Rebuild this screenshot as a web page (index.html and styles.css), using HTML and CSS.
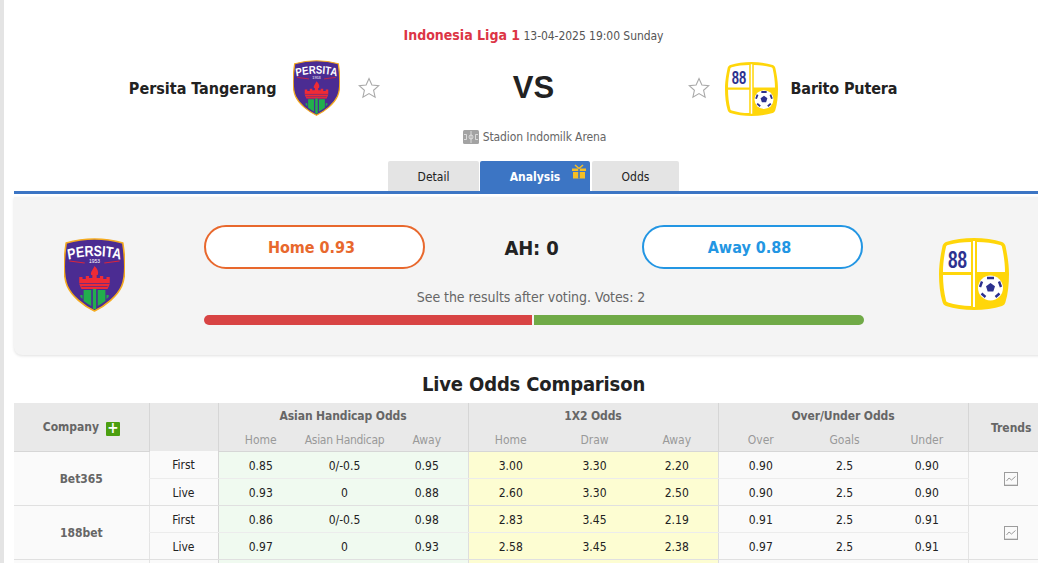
FILE: index.html
```html
<!DOCTYPE html>
<html lang="en">
<head>
<meta charset="utf-8">
<title>Persita Tangerang vs Barito Putera</title>
<link rel="stylesheet" href="styles.css">
</head>
<body>
<div class="page">
  <header class="match">
    <div class="meta"><span class="league">Indonesia Liga 1</span> <span class="when">13-04-2025 19:00 Sunday</span></div>
    <div class="teams">
      <div class="team team-home">
        <span class="team-name">Persita Tangerang</span>
        <svg class="logo-persita" viewBox="2 0 56 74" preserveAspectRatio="none" aria-hidden="true">
          <defs><path id="arc-a" d="M-36 23Q0 13 36 23"/></defs>
          <path d="M30 1C39 1 48 2.500 56 5C58 20 59 38 55 48C51 58 40 68 30 73C20 68 9 58 5 48C1 38 2 20 4 5C12 2.500 21 1 30 1Z" fill="#4b2c92" stroke="#f5ab1f" stroke-width="1.500"/>
          <text class="crest-name" transform="translate(30 0) scale(.76 1)" text-anchor="middle"><textPath href="#arc-a" startOffset="50%">PERSITA</textPath></text>
          <text x="30" y="25" class="crest-year" text-anchor="middle">1953</text>
          <path d="M7 23L21 25M39 25L53 23" stroke="#d9263b" stroke-width="1"/>
          <path d="M30 28C33 31 34 34 33 37H27C26 34 28 33 30 28Z" fill="#ef2b35"/>
          <path d="M16 39H19V41H22V38H25V40H28V37H32V40H35V38H38V41H41V39H44V46L42 51H18L16 46Z" fill="#ef2b35"/>
          <path d="M16 45.500H44M18 48.500H42" stroke="#4b2c92" stroke-width=".7"/>
          <path d="M20 52H27V68L24 66L20 63ZM28.500 51H31.500V71H28.500ZM33 52H40V63L36 66L33 68Z" fill="#22ae4c"/>
          <path d="M17 57H19V61L17 59ZM41 57H43V59L41 61Z" fill="#22ae4c"/>
        </svg>
        <svg class="star" viewBox="0 0 22 22" aria-hidden="true"><path d="M11 1.500L13.900 8L20.800 8.700L15.600 13.300L17.100 20.200L11 16.600L4.900 20.200L6.400 13.300L1.200 8.700L8.100 8Z"/></svg>
      </div>
      <div class="versus">VS</div>
      <div class="team team-away">
        <svg class="star" viewBox="0 0 22 22" aria-hidden="true"><path d="M11 1.500L13.900 8L20.800 8.700L15.600 13.300L17.100 20.200L11 16.600L4.900 20.200L6.400 13.300L1.200 8.700L8.100 8Z"/></svg>
        <svg class="logo-barito" viewBox="0 0 70 72" preserveAspectRatio="none" aria-hidden="true">
          <path d="M35 0C45 0 55 1.500 63 4C65 5 66 6 66.500 8C69 20 70 28 70 36C70 46 69 56 66.500 64C66 66 65 67 63 68C55 70.500 45 72 35 72C25 72 15 70.500 7 68C5 67 4 66 3.500 64C1 56 0 46 0 36C0 28 1 20 3.500 8C4 6 5 5 7 4C15 1.500 25 0 35 0Z" fill="#ffd60a"/>
          <path d="M32 4V34H4C4 26 5 18 7 9C7 8 8 7 9 7C16 5 24 4 32 4Z" fill="#fff"/>
          <path d="M38 4C46 4 54 5 61 7C62 7 63 8 63 9C65 18 66 26 66 34H38Z" fill="#fff"/>
          <path d="M32 37V68C24 68 16 66.500 9 64.500C8 64 7 63.500 7 62.500C5 54 4 46 4 37Z" fill="#fff"/>
          <path d="M34 3H36V69H34Z" fill="#fff"/>
          <text x="18.500" y="29.500" class="crest-88" text-anchor="middle" textLength="19" lengthAdjust="spacingAndGlyphs">88</text>
          <circle cx="51.500" cy="50" r="12.500" fill="#fff"/>
          <path d="M51.500 45L56 48.300L54.300 53.500H48.700L47 48.300Z" fill="#2d318f"/>
          <path d="M48 40H55M60 43.500L62 49M60.500 55.500L56.500 59M46.500 59L42.500 55.500M41 49L43 43.500" stroke="#2d318f" stroke-width="2.400" fill="none"/>
        </svg>
        <span class="team-name team-name-away">Barito Putera</span>
      </div>
    </div>
    <div class="venue">
      <svg class="venue-icon" viewBox="0 0 16 14" aria-hidden="true"><rect width="16" height="14" rx="1.500" fill="#a3a3a3"/><path d="M8 1V13M1 4.500H3.500V9.500H1M15 4.500H12.500V9.500H15" stroke="#e8e8e8" stroke-width=".8" fill="none"/><circle cx="8" cy="7" r="2" fill="none" stroke="#e8e8e8" stroke-width=".8"/></svg>
      <span>Stadion Indomilk Arena</span>
    </div>
    <nav class="tabs">
      <a class="tab tab-detail">Detail</a>
      <a class="tab tab-analysis">Analysis
        <svg class="gift" viewBox="0 0 14 14" aria-hidden="true"><path d="M0 4H14V6.500H0ZM1 7.500H13V14H1Z" fill="#f5bf26"/><path d="M6.200 4V14H7.800V4Z" fill="#3d76c5"/><path d="M7 4L3 .5M7 4L11 .5" stroke="#f5bf26" stroke-width="1.600"/></svg>
      </a>
      <a class="tab tab-odds">Odds</a>
    </nav>
  </header>

  <section class="vote">
    <div class="vote-logo vote-logo-home">
      <svg class="logo-persita-lg" viewBox="2 0 56 74" preserveAspectRatio="none" aria-hidden="true">
        <defs><path id="arc-b" d="M-36 23Q0 13 36 23"/></defs>
        <path d="M30 1C39 1 48 2.500 56 5C58 20 59 38 55 48C51 58 40 68 30 73C20 68 9 58 5 48C1 38 2 20 4 5C12 2.500 21 1 30 1Z" fill="#4b2c92" stroke="#f5ab1f" stroke-width="1.500"/>
        <text class="crest-name" transform="translate(30 0) scale(.76 1)" text-anchor="middle"><textPath href="#arc-b" startOffset="50%">PERSITA</textPath></text>
        <text x="30" y="25" class="crest-year" text-anchor="middle">1953</text>
        <path d="M7 23L21 25M39 25L53 23" stroke="#d9263b" stroke-width="1"/>
        <path d="M30 28C33 31 34 34 33 37H27C26 34 28 33 30 28Z" fill="#ef2b35"/>
        <path d="M16 39H19V41H22V38H25V40H28V37H32V40H35V38H38V41H41V39H44V46L42 51H18L16 46Z" fill="#ef2b35"/>
        <path d="M16 45.500H44M18 48.500H42" stroke="#4b2c92" stroke-width=".7"/>
        <path d="M20 52H27V68L24 66L20 63ZM28.500 51H31.500V71H28.500ZM33 52H40V63L36 66L33 68Z" fill="#22ae4c"/>
        <path d="M17 57H19V61L17 59ZM41 57H43V59L41 61Z" fill="#22ae4c"/>
      </svg>
    </div>
    <div class="vote-main">
      <div class="vote-buttons">
        <button class="pick pick-home">Home 0.93</button>
        <div class="handicap">AH: 0</div>
        <button class="pick pick-away">Away 0.88</button>
      </div>
      <p class="vote-note">See the results after voting. Votes: 2</p>
      <div class="vote-bar"><span class="bar-home"></span><span class="bar-away"></span></div>
    </div>
    <div class="vote-logo vote-logo-away">
      <svg class="logo-barito-lg" viewBox="0 0 70 72" preserveAspectRatio="none" aria-hidden="true">
        <path d="M35 0C45 0 55 1.500 63 4C65 5 66 6 66.500 8C69 20 70 28 70 36C70 46 69 56 66.500 64C66 66 65 67 63 68C55 70.500 45 72 35 72C25 72 15 70.500 7 68C5 67 4 66 3.500 64C1 56 0 46 0 36C0 28 1 20 3.500 8C4 6 5 5 7 4C15 1.500 25 0 35 0Z" fill="#ffd60a"/>
        <path d="M32 4V34H4C4 26 5 18 7 9C7 8 8 7 9 7C16 5 24 4 32 4Z" fill="#fff"/>
        <path d="M38 4C46 4 54 5 61 7C62 7 63 8 63 9C65 18 66 26 66 34H38Z" fill="#fff"/>
        <path d="M32 37V68C24 68 16 66.500 9 64.500C8 64 7 63.500 7 62.500C5 54 4 46 4 37Z" fill="#fff"/>
        <path d="M34 3H36V69H34Z" fill="#fff"/>
        <text x="18.500" y="29.500" class="crest-88" text-anchor="middle" textLength="19" lengthAdjust="spacingAndGlyphs">88</text>
        <circle cx="51.500" cy="50" r="12.500" fill="#fff"/>
        <path d="M51.500 45L56 48.300L54.300 53.500H48.700L47 48.300Z" fill="#2d318f"/>
        <path d="M48 40H55M60 43.500L62 49M60.500 55.500L56.500 59M46.500 59L42.500 55.500M41 49L43 43.500" stroke="#2d318f" stroke-width="2.400" fill="none"/>
      </svg>
    </div>
  </section>

  <h2 class="section-title">Live Odds Comparison</h2>

  <table class="odds">
    <colgroup>
      <col class="c-company"><col class="c-type">
      <col class="c-first"><col class="c-mid"><col class="c-last">
      <col class="c-first"><col class="c-mid"><col class="c-last">
      <col class="c-first"><col class="c-mid"><col class="c-last">
      <col class="c-trend">
    </colgroup>
    <thead>
      <tr class="head-top">
        <th rowspan="2" class="head-company">Company <span class="plus">+</span></th>
        <th rowspan="2"></th>
        <th colspan="3" class="group">Asian Handicap Odds</th>
        <th colspan="3" class="group">1X2 Odds</th>
        <th colspan="3" class="group">Over/Under Odds</th>
        <th rowspan="2" class="head-trend">Trends</th>
      </tr>
      <tr class="head-sub">
        <th class="start">Home</th><th class="narrow">Asian Handicap</th><th>Away</th>
        <th class="start">Home</th><th>Draw</th><th>Away</th>
        <th class="start">Over</th><th>Goals</th><th>Under</th>
      </tr>
    </thead>
    <tbody>
      <tr>
        <td rowspan="2" class="company">Bet365</td><td class="type">First</td>
        <td class="ah start">0.85</td><td class="ah">0/-0.5</td><td class="ah">0.95</td>
        <td class="x12 start">3.00</td><td class="x12">3.30</td><td class="x12">2.20</td>
        <td class="start">0.90</td><td>2.5</td><td>0.90</td>
        <td rowspan="2" class="trend"><svg class="trend-icon" viewBox="0 0 14 14" aria-hidden="true"><rect x=".5" y=".5" width="13" height="13"/><path d="M.5 13.200H13.500"/><path d="M2.500 9L5 6L7.500 8L11.500 4.500"/></svg></td>
      </tr>
      <tr class="group-end">
        <td class="type">Live</td>
        <td class="ah start">0.93</td><td class="ah">0</td><td class="ah">0.88</td>
        <td class="x12 start">2.60</td><td class="x12">3.30</td><td class="x12">2.50</td>
        <td class="start">0.90</td><td>2.5</td><td>0.90</td>
      </tr>
      <tr>
        <td rowspan="2" class="company">188bet</td><td class="type">First</td>
        <td class="ah start">0.86</td><td class="ah">0/-0.5</td><td class="ah">0.98</td>
        <td class="x12 start">2.83</td><td class="x12">3.45</td><td class="x12">2.19</td>
        <td class="start">0.91</td><td>2.5</td><td>0.91</td>
        <td rowspan="2" class="trend"><svg class="trend-icon" viewBox="0 0 14 14" aria-hidden="true"><rect x=".5" y=".5" width="13" height="13"/><path d="M.5 13.200H13.500"/><path d="M2.500 9L5 6L7.500 8L11.500 4.500"/></svg></td>
      </tr>
      <tr class="group-end">
        <td class="type">Live</td>
        <td class="ah start">0.97</td><td class="ah">0</td><td class="ah">0.93</td>
        <td class="x12 start">2.58</td><td class="x12">3.45</td><td class="x12">2.38</td>
        <td class="start">0.97</td><td>2.5</td><td>0.91</td>
      </tr>
      <tr>
        <td class="company"></td><td class="type"></td>
        <td class="ah start"></td><td class="ah"></td><td class="ah"></td>
        <td class="x12 start"></td><td class="x12"></td><td class="x12"></td>
        <td class="start"></td><td></td><td></td><td class="trend"></td>
      </tr>
    </tbody>
  </table>
</div>
</body>
</html>
```
FILE: styles.css
```css
* { box-sizing: border-box; }
html, body { margin: 0; height: 563px; overflow: hidden; background: #fff; }
body {
  font-family: "DejaVu Sans Condensed", "DejaVu Sans", sans-serif;
  font-size: 12px;
  color: #222;
}
.page {
  width: 1053px;
  height: 563px;
  border-left: 4px solid #e4e4e4;
  padding-left: 10px;
  overflow: hidden;
}
.match { height: 194px; padding-top: 26px; border-bottom: 3px solid #3c75c4; text-align: center; }
.meta { height: 18px; line-height: 18px; }
.league { color: #dc3545; font-size: 14px; font-weight: 700; }
.when { color: #555; font-size: 12px; letter-spacing: -.05px; }
.teams {
  display: grid;
  grid-template-columns: 1fr 308px 1fr;
  align-items: center;
  height: 56px;
  margin-top: 16px;
}
.team { display: flex; align-items: center; }
.team-home { justify-content: flex-end; }
.team-name { font-size: 16px; font-weight: 700; color: #222; }
.team-name-away { letter-spacing: -.15px; }
.logo-persita { width: 47px; height: 56px; margin: 0 18px 0 16px; }
.logo-barito { width: 53px; height: 54px; margin: 1px 13px 0 15px; }
.star { width: 22px; height: 22px; fill: #fff; stroke: #a9a9a9; stroke-width: 1.100; }
.versus { font-family: "Liberation Sans", Arial, sans-serif; font-size: 31px; font-weight: 700; color: #222; }
.crest-name { font-family: "Liberation Sans", sans-serif; font-size: 15px; font-weight: 700; fill: #fff; }
.crest-year { font-family: "Liberation Sans", sans-serif; font-size: 4.500px; fill: #fff; }
.crest-88 { font-family: "Liberation Sans", sans-serif; font-size: 24px; font-weight: 700; fill: #2d318f; }
.venue {
  display: flex;
  justify-content: center;
  align-items: center;
  gap: 4px;
  height: 16px;
  margin-top: 13px;
  padding-left: 2px;
  color: #666;
  letter-spacing: -.1px;
}
.venue-icon { width: 16px; height: 14px; }
.tabs { display: flex; justify-content: center; gap: 1px; height: 30px; margin-top: 16px; }
.tab {
  display: flex;
  align-items: center;
  justify-content: center;
  position: relative;
  padding-top: 2px;
  background: #e4e4e4;
  color: #222;
  border-radius: 2px 2px 0 0;
}
.tab-detail { width: 91px; }
.tab-analysis { width: 110px; background: #3c75c4; color: #fff; font-weight: 700; }
.tab-odds { width: 87px; margin-left: 1px; }
.gift { position: absolute; top: 3px; right: 4px; width: 14px; height: 15px; }
.vote {
  display: flex;
  height: 158px;
  margin-top: 3px;
  background: #f4f4f4;
  border-radius: 0 0 0 8px;
  box-shadow: 0 1px 3px rgba(0, 0, 0, .12);
}
.vote-logo { display: flex; align-items: center; justify-content: flex-start; flex: none; width: 190px; }
.vote-logo-home { padding-left: 50px; height: 156px; }
.vote-logo-away { padding-left: 75px; height: 154px; }
.logo-persita-lg { width: 61px; height: 74px; }
.logo-barito-lg { width: 70px; height: 72px; }
.vote-main { flex: none; width: 660px; padding-top: 28px; }
.vote-buttons { display: flex; justify-content: space-between; align-items: center; width: 659px; }
.pick {
  width: 221px;
  height: 44px;
  border: 2px solid;
  border-radius: 22px;
  background: #fff;
  font-family: inherit;
  font-size: 16px;
  font-weight: 700;
  padding: 0 6px 0 0;
}
.pick-home { color: #e8682d; border-color: #e8682d; }
.pick-away { color: #2396e3; border-color: #2396e3; }
.handicap { font-size: 20px; font-weight: 700; color: #222; letter-spacing: -.2px; padding: 2px 4px 0 0; }
.vote-note { margin: 19px 0 0; padding-right: 6px; height: 18px; line-height: 18px; text-align: center; font-size: 14px; color: #666; letter-spacing: -.05px; }
.vote-bar { display: flex; gap: 2px; height: 10px; margin-top: 9px; }
.bar-home { width: 328px; background: #d84444; border-radius: 5px 0 0 5px; }
.bar-away { flex: 1; background: #70aa47; border-radius: 0 5px 5px 0; }
.section-title { margin: 16px 0 0; height: 32px; line-height: 26px; text-align: center; font-size: 20px; font-weight: 700; color: #222; letter-spacing: -.15px; }
.odds { width: 1040px; table-layout: fixed; border-collapse: collapse; text-align: center; }
.c-company { width: 135px; }
.c-type { width: 69px; }
.c-first { width: 85px; }
.c-mid { width: 83px; }
.c-last { width: 82px; }
.c-trend { width: 86px; }
.odds th { background: #e9e9e9; font-size: 12px; font-weight: 700; color: #666; padding: 0; }
.head-top th { height: 24px; padding-top: 2px; border-left: 1px solid #d6d6d6; }
.head-top th:first-child { border-left: 0; }
.group { letter-spacing: -.1px; }
.odds .head-sub th { height: 24px; padding-top: 3px; font-weight: 400; color: #999; border-bottom: 1px solid #d6d6d6; }
.odds .head-sub .narrow { letter-spacing: -.3px; }
.head-sub .start { border-left: 1px solid #d6d6d6; }
.head-company, .head-trend { border-bottom: 1px solid #d6d6d6; }
.plus {
  display: inline-block;
  width: 14px;
  height: 14px;
  line-height: 13px;
  margin-left: 3px;
  vertical-align: -2px;
  background: #4c9f10;
  color: #fff;
  border-radius: 1px;
  font-weight: 700;
  font-size: 15px;
}
.odds td { height: 27px; padding: 2px 0 0; background: #fafafa; color: #222; border-bottom: 1px solid #ececec; }
.group-end td { border-bottom-color: #e0e0e0; }
.odds td.company { font-size: 12px; font-weight: 700; color: #666; border-bottom-color: #e0e0e0; }
.odds td.type { border-left: 1px solid #e4e4e4; border-right: 1px solid #d6d6d6; }
.odds td.ah { background: #f0faf0; }
.odds td.x12 { background: #fdfdd2; }
.odds td.start { border-left: 1px solid #dedede; }
.odds td.trend { border-left: 1px solid #e4e4e4; border-bottom-color: #e0e0e0; }
.trend-icon { display: block; width: 14px; height: 14px; margin: 0 auto; fill: none; stroke: #9c9c9c; stroke-width: 1; }
```
